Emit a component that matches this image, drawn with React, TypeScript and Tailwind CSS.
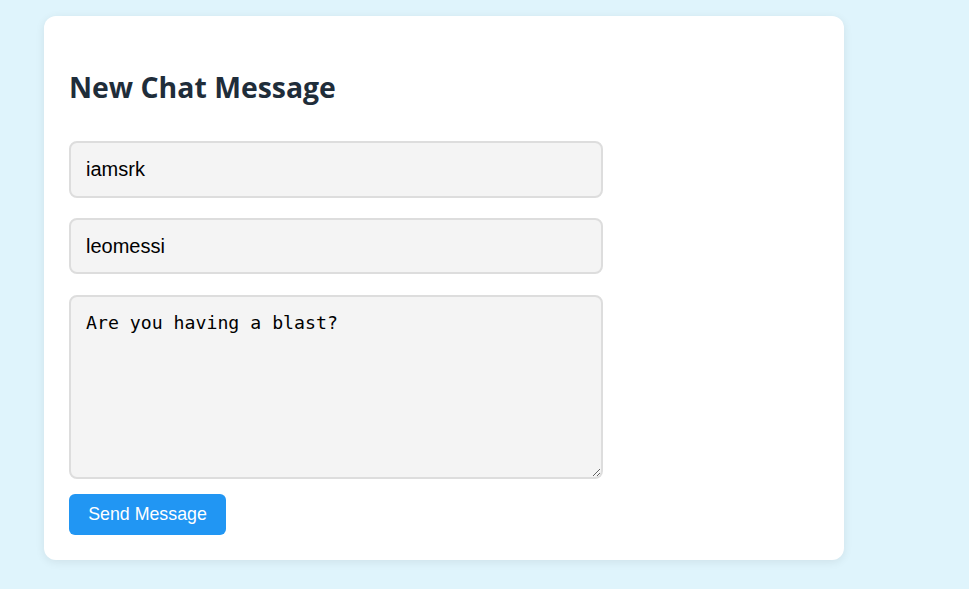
import React from "react";

export default function App() {
  return (
    <div className="min-h-[589px] w-full bg-[#dff4fc] pt-4 pl-11">
      <div className="flex w-[800px] flex-col items-start rounded-xl bg-white px-[25px] pt-[53px] pb-[25px] shadow-[0_2px_10px_rgba(0,0,0,0.08)]">
        <h2 className="font-['Open_Sans','Noto_Sans',sans-serif] text-[28.4px] leading-[36px] font-bold text-[#1f2d3a]">
          New Chat Message
        </h2>
        <input
          defaultValue="iamsrk"
          className="mt-9 h-[57px] w-[534px] rounded-lg border-2 border-[#dddddd] bg-[#f4f4f4] px-[15px] font-['Liberation_Sans',Arial,sans-serif] text-[20px] text-black outline-none"
        />
        <input
          defaultValue="leomessi"
          className="mt-5 h-[56px] w-[534px] rounded-lg border-2 border-[#dddddd] bg-[#f4f4f4] px-[15px] font-['Liberation_Sans',Arial,sans-serif] text-[20px] text-black outline-none"
        />
        <textarea
          defaultValue="Are you having a blast?"
          className="mt-[21px] h-[184px] w-[534px] resize rounded-lg border-2 border-[#dddddd] bg-[#f4f4f4] px-[15px] pt-[14px] pb-3 font-['DejaVu_Sans_Mono','Liberation_Mono',monospace] text-[18.2px] leading-[24px] text-black outline-none"
        />
        <button className="mt-[15px] h-[41px] w-[157px] rounded-md bg-[#2196f3] font-['Liberation_Sans',Arial,sans-serif] text-[17.8px] text-white">
          Send Message
        </button>
      </div>
    </div>
  );
}
